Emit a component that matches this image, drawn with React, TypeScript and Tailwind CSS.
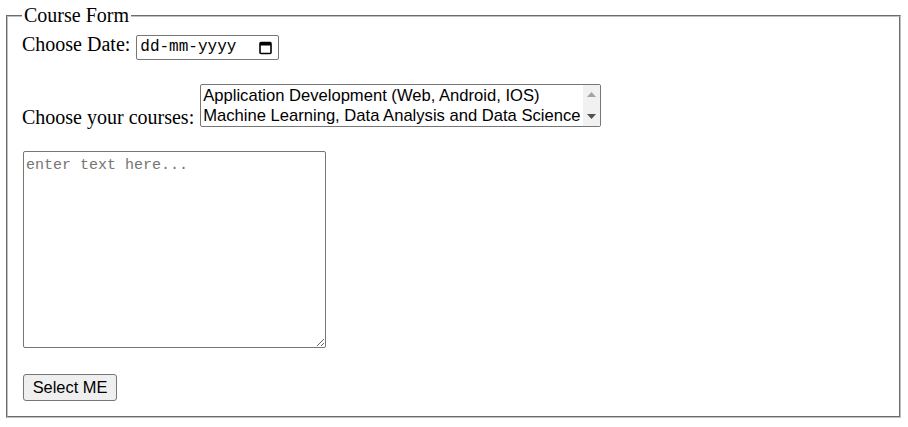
const COURSES = [
  'Application Development (Web, Android, IOS)',
  'Machine Learning, Data Analysis and Data Science',
]

function CalendarIcon() {
  return (
    <svg width="13" height="14" viewBox="0 0 13 14" className="ml-auto">
      <rect x="1" y="1.5" width="11" height="11" rx="1" fill="none" stroke="#000" strokeWidth="1.6" />
      <rect x="1" y="1.5" width="11" height="3" fill="#000" />
    </svg>
  )
}

function CourseList() {
  return (
    <div className="inline-block align-[3px] ml-[6px] w-[401px] h-[43px] border border-[#767676] rounded-[2px] bg-white relative font-['Liberation_Sans',Arial,sans-serif] text-[16.6px] text-black">
      <div className="pl-[2px] pt-[1px]">
        {COURSES.map((c) => (
          <div key={c} className="h-[20px] leading-[20px] whitespace-nowrap">{c}</div>
        ))}
      </div>
      <div className="absolute right-0 top-0 bottom-0 w-[17px] bg-[#f1f1f1] flex flex-col items-center justify-between py-[7px]">
        <svg width="9" height="5" viewBox="0 0 9 5"><path d="M0 5 L4.5 0 L9 5 Z" fill="#a3a3a3" /></svg>
        <svg width="9" height="5" viewBox="0 0 9 5"><path d="M0 0 L4.5 5 L9 0 Z" fill="#505050" /></svg>
      </div>
    </div>
  )
}

export default function App() {
  return (
    <div className="min-h-screen bg-white pt-[4px] pl-[6px] font-['Liberation_Serif','Times_New_Roman',serif] text-[20px] text-black">
      <fieldset className="w-[895px] border-2 [border-style:groove] border-[#c0c0c0] pl-[14px] pr-[14px] pt-0 pb-[15px]">
        <legend className="px-[2px] leading-[23px]">Course Form</legend>

        <div className="mt-[5px] leading-[25px]">
          <span className="align-baseline">Choose Date:</span>
          <div className="inline-flex align-baseline items-center ml-[6px] w-[143px] h-[25px] border border-[#767676] rounded-[2px] pl-[3px] pr-[6px] font-['Liberation_Mono',monospace] text-[16px]">
            <span>dd-mm-yyyy</span>
            <CalendarIcon />
          </div>
        </div>

        <div className="mt-[24px] leading-[22px]">
          <span>Choose your courses:</span>
          <CourseList />
        </div>

        <textarea
          placeholder="enter text here..."
          className="block mt-[23px] ml-[1px] w-[303px] h-[197px] border border-[#767676] rounded-[2px] px-[2px] pt-[5px] pb-[2px] resize font-['Liberation_Mono',monospace] text-[15px] leading-[18px] placeholder:text-[#757575]"
        />

        <button className="block mt-[26px] ml-[1px] w-[94px] h-[27px] bg-[#efefef] border border-[#767676] rounded-[3px] font-['Liberation_Sans',Arial,sans-serif] text-[16.4px] text-black">
          Select ME
        </button>
      </fieldset>
    </div>
  )
}
